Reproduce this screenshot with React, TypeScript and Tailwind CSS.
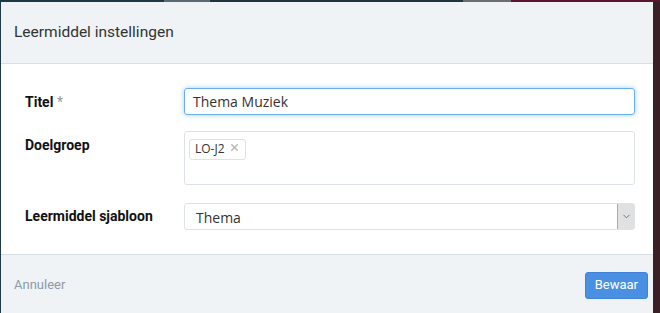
import { ChevronDown, X } from "lucide-react";

const App = () => {
  return (
    <div className="w-[660px] h-[313px] overflow-hidden bg-[#1e3a44] flex flex-col font-['Roboto',sans-serif]">
      <div className="h-[2px] shrink-0 flex">
        <div className="w-[164px] bg-[#1d3943]" />
        <div className="w-[46px] bg-[#5a6a70]" />
        <div className="w-[253px] bg-[#21333b]" />
        <div className="w-[48px] bg-[#6b6f72]" />
        <div className="flex-1 bg-[#5a1530]" />
      </div>
      <div className="flex-1 flex pl-[1px] pr-[7px] bg-[linear-gradient(to_right,#1e3a44_0,#1e3a44_650px,#3a2026_650px)]">
        <div className="flex-1 flex flex-col bg-white">
          <div className="h-[62px] shrink-0 flex items-center px-[13px] bg-[#eff3f6] border-b border-[#d6dee6]">
            <h2 className="text-[15.5px] text-[#333] pt-[1px]">Leermiddel instellingen</h2>
          </div>

          <div className="flex-1 flex flex-col gap-[16px] pl-[24px] pr-[18px] pt-[24px]">
            <div className="flex items-center">
              <label className="w-[159px] text-[14px] font-bold text-[#111] pt-[2px]">
                Titel <span className="font-normal text-[#999]">*</span>
              </label>
              <div className="flex-1 h-[27px] flex items-center px-[8px] border border-[#66aff0] rounded-[3px] shadow-[0_0_5px_rgba(102,175,233,0.6)] font-['Open_Sans',sans-serif] text-[14px] text-[#333]">
                Thema Muziek
              </div>
            </div>

            <div className="flex items-start">
              <label className="w-[159px] text-[14px] font-bold text-[#111] pt-[4px]">Doelgroep</label>
              <div className="flex-1 h-[54px] border border-[#dde2e8] rounded-[3px] p-[4px]">
                <span className="inline-flex items-center gap-[4px] h-[21px] px-[5px] border border-[#dde2e8] rounded-[3px] font-['Open_Sans',sans-serif] text-[12px] text-[#333]">
                  LO-J2
                  <X size={11} strokeWidth={3.5} className="text-[#bbb] -mt-[4px]" />
                </span>
              </div>
            </div>

            <div className="flex items-center mt-[2px]">
              <label className="w-[159px] text-[14px] font-bold text-[#111]">Leermiddel sjabloon</label>
              <div className="flex-1 h-[27px] flex items-center border border-[#dde2e8] rounded-[3px] font-['Open_Sans',sans-serif] text-[14px] text-[#333]">
                <span className="flex-1 pl-[11px] pt-[2px]">Thema</span>
                <span className="w-[17px] h-full flex items-center justify-center bg-[#e1e1e1] border-l border-[#aaa]">
                  <ChevronDown size={11} strokeWidth={1.5} className="text-[#444]" />
                </span>
              </div>
            </div>
          </div>

          <div className="h-[59px] shrink-0 flex items-center justify-between pl-[13px] pr-[5px] pt-[2px] bg-[#eff3f6] border-t border-[#d6dee6]">
            <span className="text-[13px] text-[#8d9aa8]">Annuleer</span>
            <button className="h-[27px] px-[9px] rounded-[3px] bg-[#4a90e2] border border-[#3f82d6] text-white text-[13px]">
              Bewaar
            </button>
          </div>
        </div>
      </div>
    </div>
  );
};

export default App;
